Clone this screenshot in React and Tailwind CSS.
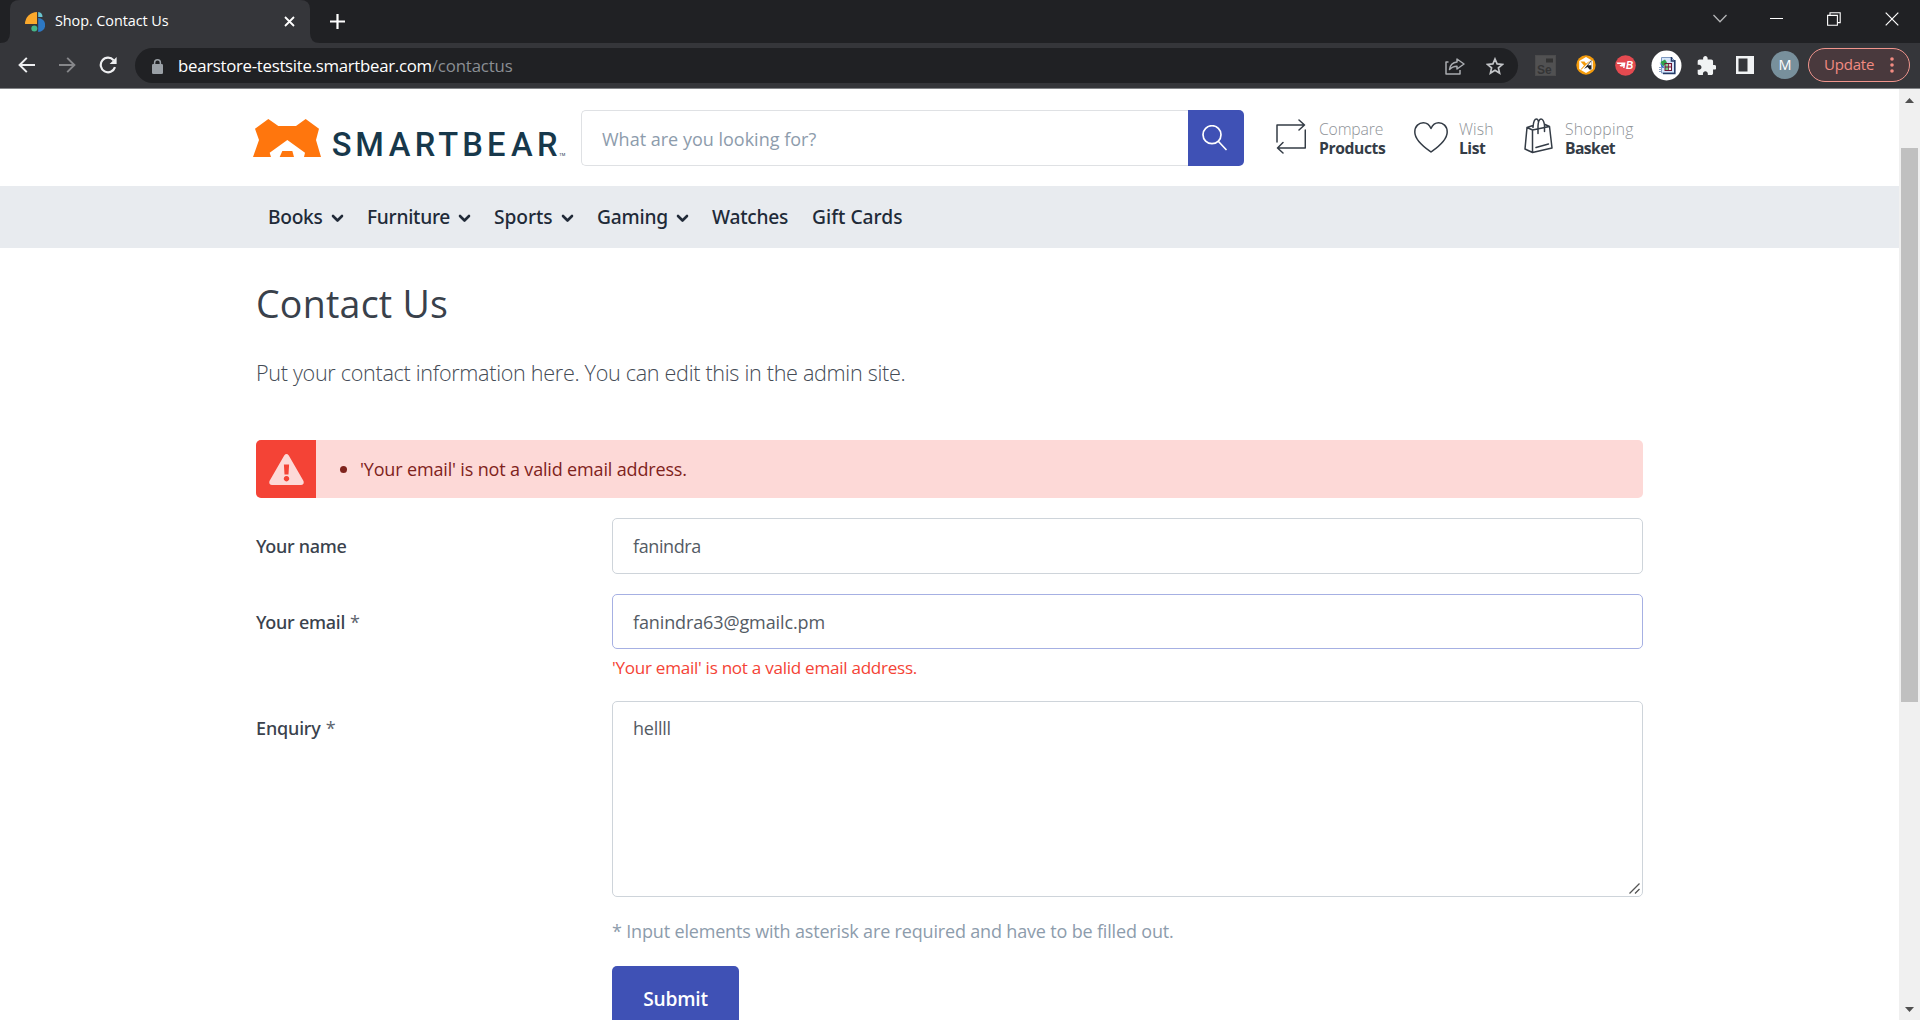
import { Search } from 'lucide-react';

const Chevron = () => (
  <svg className="h-[9px] w-[13px]" viewBox="0 0 13 9" fill="none" stroke="#212a38" strokeWidth="2.6" strokeLinecap="round" strokeLinejoin="round">
    <path d="M2 2l4.5 4.5L11 2" />
  </svg>
);

function TabStrip() {
  return (
    <div className="flex h-[43px] bg-[#202124]">
      <svg className="h-[43px] w-[310px] shrink-0 -mr-[310px]" viewBox="0 0 310 43">
        <path d="M0 43 Q10 43 10 33 V9 Q10 0 20 0 H300 Q310 0 310 9 V33 V43 Z" fill="#35363a" />
      </svg>
      <div className="relative flex w-[310px] shrink-0 items-center">
        <svg className="ml-[25px] h-5 w-5 shrink-0" viewBox="0 0 20 20">
          <path d="M0 12A12 12 0 0 1 12 0V12Z" fill="#fba92c" />
          <path d="M13.2 0A5 5 0 0 1 17.5 5H13.2Z" fill="#6bc5cf" />
          <path d="M13.2 6A7 7 0 0 1 13.2 20Z" fill="#2d78c4" />
          <circle cx="9.3" cy="16.6" r="3" fill="#45b688" />
        </svg>
        <span className="ml-[10px] w-[225px] shrink-0 whitespace-nowrap pb-[2px] text-[14.4px] leading-5 tracking-[-0.06px] text-white">Shop. Contact Us</span>
        <svg className="ml-[4px] h-[11px] w-[11px] shrink-0" viewBox="0 0 11 11" stroke="#fff" strokeWidth="1.8"><path d="M1 1l9 9M10 1l-9 9" /></svg>
      </div>
      <svg className="h-[43px] w-[14px]" viewBox="0 0 14 43"><path d="M0 33Q0 43 10 43H0Z" fill="#35363a" /></svg>
      <svg className="ml-[6px] mt-[14px] h-[15px] w-[15px]" viewBox="0 0 15 15" stroke="#fff" strokeWidth="2.2"><path d="M7.5 0v15M0 7.5h15" /></svg>
      <div className="ml-auto flex pt-[11px]">
        <svg className="mr-[43px] mt-[3px] h-[9px] w-[14px]" viewBox="0 0 14 9" fill="none" stroke="#b4b5b7" strokeWidth="1.3"><path d="M.5 1L7 7.8 13.5 1" /></svg>
        <svg className="mr-[44px] h-4 w-[13px]" viewBox="0 0 13 16"><path d="M0 7h13v1H0z" fill="#fff" /></svg>
        <svg className="mr-[44px] mt-[1px] h-[14px] w-[14px]" viewBox="0 0 14 14" fill="none" stroke="#fff" strokeWidth="1.1"><path d="M.6 3.4h9.8v9.8H.6zM3 3V.8h10.2v9.8H11" /></svg>
        <svg className="mr-[21px] mt-[1px] h-[14px] w-[14px]" viewBox="0 0 14 14" stroke="#fff" strokeWidth="1.2"><path d="M.7.7l12.6 12.6M13.3.7L.7 13.3" /></svg>
      </div>
    </div>
  );
}

function Toolbar() {
  return (
    <div className="flex h-[45px] items-start bg-[#35363a] pt-[5px]">
      <svg className="ml-[18px] mt-[9px] h-4 w-[17px] shrink-0" viewBox="0 0 17 16" fill="none" stroke="#eeeff1" strokeWidth="2"><path d="M17 8H1.5M8.8 .9L1.6 8l7.2 7.1" /></svg>
      <svg className="ml-[24px] mt-[9px] h-4 w-[17px] shrink-0" viewBox="0 0 17 16" fill="none" stroke="#86878a" strokeWidth="1.9"><path d="M0 8h15.5M8.2 .9L15.4 8l-7.2 7.1" /></svg>
      <svg className="ml-[23px] mt-[8px] h-[18px] w-[18px] shrink-0" viewBox="0 0 18 18" fill="none" stroke="#eeeff1" strokeWidth="2.2"><path d="M16 11.2A7.3 7.3 0 1 1 14.6 4.2" /><path d="M17.6 1v7h-7z" fill="#eeeff1" stroke="none" /></svg>
      <div className="ml-[18px] flex h-[35px] w-[1383px] shrink-0 rounded-full bg-[#202124]">
        <svg className="ml-[17px] mt-[11px] h-[15px] w-[11px]" viewBox="0 0 11 15"><rect y="5" width="11" height="10" rx="1.3" fill="#9aa0a6" /><path d="M2.6 6V3.7a2.9 2.9 0 0 1 5.8 0V6" fill="none" stroke="#9aa0a6" strokeWidth="1.5" /></svg>
        <div className="ml-[15px] whitespace-nowrap pt-[6px] text-[16.8px] leading-6">
          <span className="tracking-[-0.28px] text-white">bearstore-testsite.smartbear.com</span>
          <span className="tracking-[-0.13px] text-[#8b8f94]">/contactus</span>
        </div>
        <svg className="ml-auto mr-[21px] mt-[10px] h-[17px] w-[20px]" viewBox="0 0 20 17" fill="none" stroke="#a9acb0" strokeWidth="1.5" strokeLinejoin="round"><path d="M3.5 4H1v12h14v-4" /><path d="M12 1l7 5-7 5V8.2C8.800 8.200 6.500 9.200 4.500 11.500C5 7.500 7.500 4.300 12 3.900Z" /></svg>
        <svg className="mr-[14px] mt-[9px] h-[18px] w-[18px]" viewBox="0 0 18 18" fill="none" stroke="#c3c5c8" strokeWidth="1.7"><path d="M9 2l2.100 4.900 5.300.5-4 3.500 1.200 5.200L9 13.300l-4.600 2.800 1.200-5.200-4-3.500 5.300-.5z" /></svg>
      </div>
      <svg className="ml-[17px] mt-[7px] h-[21px] w-[21px] shrink-0" viewBox="0 0 21 21"><rect width="21" height="21" fill="#4b4b4c" /><rect x="1" y="1" width="19" height="19" fill="#515152" /><rect x="11" y="3.500" width="7" height="4" fill="#333" /><text x="2" y="18.500" fontSize="12" fontWeight="700" fontFamily="Liberation Sans" fill="#353536">Se</text></svg>
      <svg className="ml-[20px] mt-[7px] h-[20px] w-[20px] shrink-0" viewBox="0 0 20 20"><circle cx="10" cy="10" r="9.700" fill="#f49b0b" /><path d="M10 2l6.800 4v8L10 18l-6.800-4V6z" fill="#fff" /><path d="M4.500 6.500h4l1.500 2 5-3.500-9.500 9.500H4.500L8 10.500z" fill="#f49b0b" /><path d="M15.500 5v9.500h-2L11.500 12l-3.500 2z" fill="#222" /><path d="M12 10.300L15.500 6v4.300z" fill="#fff" /></svg>
      <svg className="ml-[19px] mt-[7px] h-[21px] w-[21px] shrink-0" viewBox="0 0 21 21"><circle cx="10.500" cy="10.500" r="10.300" fill="#e44a50" /><path d="M1.500 7.500h9L9.500 13H8l.5-1.500H5.500L4.500 10h2l-.5-1H2.500z" fill="#fff" /><text x="11" y="14" fontSize="10" fontWeight="700" fontStyle="italic" fontFamily="Liberation Sans" fill="#fff">B</text></svg>
      <svg className="ml-[15px] mt-[2px] h-[31px] w-[31px] shrink-0" viewBox="0 0 31 31"><circle cx="15.500" cy="15.500" r="15" fill="#fff" /><path d="M10.500 7.500h10l3 3V23h-13z" fill="#d7e6fa" stroke="#7d98c0" strokeWidth="1" /><path d="M20.500 7v4H24M23.800 10v13.500H12" fill="none" stroke="#253c69" strokeWidth="1.600" /><path d="M9.500 12l4.500-2.500 2 3-4 4z" fill="#2fa34b" /><path d="M8.500 12.500l5 5-2 .5z" fill="#2769c4" /><rect x="13.500" y="13" width="7.500" height="8" fill="#6d1836" /><path d="M14.500 14H17v2.500h-2.500z" fill="#8ad59a" /><path d="M17.800 14h2.200v2.500h-2.200z" fill="#f3c9cf" /><path d="M14.500 17.500H17V20h-2.500z" fill="#6fd381" /><path d="M17.800 17.500h2.200V20h-2.200z" fill="#f4f4f4" /><path d="M8 17.500h2M8 19.500h3M8 21.500h2" stroke="#8aa0c4" /></svg>
      <svg className="ml-[15px] mt-[8px] h-[19px] w-[19px] shrink-0" viewBox="1.500 1 20.500 21" fill="#f1f3f4"><path d="M20.500 11H19V7c0-1.100-.9-2-2-2h-4V3.500C13 2.120 11.880 1 10.500 1S8 2.120 8 3.500V5H4c-1.100 0-1.990.9-1.990 2v3.800H3.500c1.490 0 2.700 1.210 2.700 2.700s-1.210 2.700-2.700 2.700H2V20c0 1.100.9 2 2 2h3.800v-1.500c0-1.490 1.210-2.700 2.700-2.700 1.490 0 2.700 1.210 2.700 2.700V22H17c1.100 0 2-.9 2-2v-4h1.500c1.380 0 2.500-1.120 2.500-2.500S21.880 11 20.500 11z" /></svg>
      <svg className="ml-[20px] mt-[8px] h-[18px] w-[18px] shrink-0" viewBox="0 0 18 18"><path d="M0 0h18v18H0zM2.500 2.500v13h9v-13z" fill="#f1f3f4" fillRule="evenodd" /></svg>
      <div className="ml-[17px] mt-[3px] flex h-7 w-7 shrink-0 items-center justify-center rounded-full bg-[#78909c] text-[14.500px] leading-none text-white">M</div>
      <div className="ml-[9px] flex h-[34px] w-[102px] shrink-0 items-center rounded-full border border-[#f1958d] bg-[#49393d]">
        <span className="ml-[15px] w-[52px] pb-[2px] text-[15px] leading-5 tracking-[-0.200px] text-[#f28b82]">Update</span>
        <svg className="ml-[14px] h-4 w-1" viewBox="0 0 4 16" fill="#f28b82"><circle cx="2" cy="2" r="1.800" /><circle cx="2" cy="8" r="1.800" /><circle cx="2" cy="14" r="1.800" /></svg>
      </div>
    </div>
  );
}

function Logo() {
  return (
    <svg className="mt-[30px] h-[40px] w-[315px] shrink-0" viewBox="0 0 945 120">
      <path d="M6 29L46 0 76 21H129L158 0 198 29 189 63 204 114H153L156 101 103 63 50 101 54 114H0L18 63Z" fill="#ff760d" />
      <path d="M88 96H118L123 114H80Z" fill="#ff760d" />
      <text y="110" x="236 307 407 485 556 628 702 774 852" fontSize="98" fontWeight="500" fontFamily="Roboto" fill="#17384b">SMARTBEAR</text>
      <text x="919" y="110" fontSize="12" fontFamily="Roboto" fill="#17384b">TM</text>
    </svg>
  );
}

function HeaderLink({ top, bottom, className, topClass, bottomClass, children }) {
  return (
    <div className={`flex shrink-0 ${className}`}>
      {children}
      <div className="whitespace-nowrap pt-[31px] text-[15.700px] leading-[19px]">
        <div className={`font-light text-[#8e9297] ${topClass}`}>{top}</div>
        <div className={`font-bold text-[#343c46] ${bottomClass}`}>{bottom}</div>
      </div>
    </div>
  );
}

function Header() {
  return (
    <header className="flex h-[97px] pl-[253px]">
      <Logo />
      <div className="ml-[13px] mt-[21px] flex h-14 w-[663px] shrink-0">
        <div className="flex-1 rounded-l-[5px] border border-r-0 border-[#dfe1e4] pl-5 pt-[14px] text-[18px] leading-7 text-[#8d9cac]">What are you looking for?</div>
        <div className="w-14 rounded-r-[5px] bg-[#3f51b5]">
          <svg className="ml-[14px] mt-[15px] h-[26px] w-[25px]" viewBox="0 0 25 26" fill="none" stroke="#fff" strokeWidth="1.700" strokeLinecap="round"><circle cx="10" cy="9.700" r="9" /><path d="M16.500 16.500l7.500 8" /></svg>
        </div>
      </div>
      <HeaderLink top="Compare" bottom="Products" className="ml-8 w-[138px]" topClass="tracking-[-0.140px]" bottomClass="tracking-[-0.400px]">
        <svg className="mr-[13px] mt-[30px] h-[35px] w-[30px]" viewBox="0 0 30 35" fill="none" stroke="#343c46" strokeWidth="1.500" strokeLinecap="round" strokeLinejoin="round"><path d="M1 23V6h27.500M23 1l5.500 5-5.500 5M29.300 11v18H1.500M7 23.500L1.500 29 7 34" /></svg>
      </HeaderLink>
      <HeaderLink top="Wish" bottom="List" className="w-[110px]" topClass="tracking-[0.100px]" bottomClass="tracking-[-0.500px]">
        <svg className="mr-[11px] mt-[33px] h-[31px] w-[34px]" viewBox="0 0 34 31" fill="none" stroke="#343c46" strokeWidth="1.500" strokeLinejoin="round"><path d="M17 30C12 26.500 .8 19 .8 10C.8 4 5 .8 9.300 .8C12.500 .8 15.500 3 17 6.500C18.500 3 21.500 .8 24.700 .8C29 .8 33.200 4 33.200 10C33.200 19 22 26.500 17 30Z" /></svg>
      </HeaderLink>
      <HeaderLink top="Shopping" bottom="Basket" topClass="tracking-[0.240px]" bottomClass="tracking-[-0.600px]">
        <svg className="mr-[12px] mt-[29px] h-[36px] w-[29px]" viewBox="0 0 29 36" fill="none" stroke="#343c46" strokeWidth="1.500" strokeLinecap="round" strokeLinejoin="round"><path d="M3 9.500L8.500 12 25.500 8.500 28 30 8.500 34.500 1 31ZM8.500 12V34.500M12 29.500L24.500 26M3 9.500L9 7.500M25.500 8.500L21 6.500M14 15.500V8Q14.500 1 17 1Q19.500 1 20.500 7V13.500M9 9.500Q9.500 1 12.500 1Q14 1 14.500 4" /></svg>
      </HeaderLink>
    </header>
  );
}

const NAV = [
  { label: 'Books', menu: true, box: 'w-[99px]', track: 'tracking-[-0.300px]', gap: 'ml-[8px]' },
  { label: 'Furniture', menu: true, box: 'w-[127px]', track: 'tracking-[-0.280px]', gap: 'ml-[8px]' },
  { label: 'Sports', menu: true, box: 'w-[103px]', track: 'tracking-[-0.060px]', gap: 'ml-[8px]' },
  { label: 'Gaming', menu: true, box: 'w-[115px]', track: 'tracking-[-0.200px]', gap: 'ml-[8px]' },
  { label: 'Watches', box: 'w-[100px]', track: 'tracking-[-0.250px]' },
  { label: 'Gift Cards', box: 'w-[100px]', track: 'tracking-[0.020px]' },
];

function Nav() {
  return (
    <nav className="flex h-[62px] items-center bg-[#e8ebef] pl-[268px] font-['Noto_Sans',sans-serif] text-[19.200px] font-medium text-[#212a38]">
      {NAV.map((n) => (
        <div key={n.label} className={`flex shrink-0 items-center whitespace-nowrap ${n.box}`}>
          <span className={`pb-[1px] leading-7 ${n.track}`}>{n.label}</span>
          {n.menu && <span className={`pt-[2px] ${n.gap}`}><Chevron /></span>}
        </div>
      ))}
    </nav>
  );
}

const Label = ({ text, track, required, className = 'pt-[14px]' }) => (
  <div className={`w-[356px] shrink-0 text-[18px] leading-7 text-[#3a424d] ${className}`}>
    <span className={`font-['Noto_Sans',sans-serif] font-medium ${track}`}>{text}</span>
    {required && <span className="ml-[5px] text-[#5c636d]">*</span>}
  </div>
);

function Content() {
  return (
    <main className="w-[1387px] ml-[256px] text-[18px] leading-7">
      <h1 className="pt-[30px] text-[37.500px] leading-[52px] tracking-[0.250px] text-[#39414b]">Contact Us</h1>
      <p className="mt-[27px] whitespace-nowrap text-[21.600px] font-light leading-8 tracking-[-0.310px] text-[#444b55]">Put your contact information here. You can edit this in the admin site.</p>
      <div className="mt-[51px] flex h-[58px] items-center overflow-hidden rounded-[5px] bg-[#fdd9d7] text-[#7f231c]">
        <div className="flex h-full w-[60px] items-center justify-center bg-[#f44336]">
          <svg className="h-[31px] w-[35px]" viewBox="0 0 35 31"><path d="M15.200 1.500Q17.500-1.300 19.800 1.500L34.500 27Q35.500 30.800 32 31H3Q-.5 30.800 .5 27ZM14.900 10.500L15.500 20.500H19.500L20.100 10.500ZM17.500 22A2.700 2.700 0 1 0 17.510 22Z" fill="#fdd9d7" fillRule="evenodd" /></svg>
        </div>
        <span className="ml-6 h-[7px] w-[7px] rounded-full bg-[#7f231c]" />
        <span className="ml-[13px] tracking-[-0.160px]">&#39;Your email&#39; is not a valid email address.</span>
      </div>
      <div className="mt-5 flex">
        <Label text="Your name" track="tracking-[-0.300px]" />
        <div className="h-14 flex-1 rounded-[5px] border border-[#ced4da] pl-5 pt-[13px] tracking-[-0.400px] text-[#545b64]">fanindra</div>
      </div>
      <div className="mt-5 flex">
        <Label text="Your email" track="tracking-[-0.260px]" required />
        <div className="flex-1">
          <div className="h-[55px] rounded-[5px] border border-[#a6b0e3] pl-5 pt-[13px] tracking-[-0.120px] text-[#545b64]">fanindra63@gmailc.pm</div>
          <div className="mt-[5px] text-[17.100px] leading-7 tracking-[-0.280px] text-[#f44336]">&#39;Your email&#39; is not a valid email address.</div>
        </div>
      </div>
      <div className="mt-[19px] flex">
        <Label text="Enquiry" track="tracking-[-0.150px]" required className="pt-[13px]" />
        <div className="flex h-[196px] flex-1 rounded-[5px] border border-[#ced4da] pl-5 pt-[12px] tracking-[-0.250px] text-[#545b64]">
          hellll
          <svg className="mb-[2px] ml-auto mr-[2px] h-[11px] w-[11px] self-end" viewBox="0 0 11 11" stroke="#555" strokeWidth="1.300"><path d="M.5 10.500l10-10M6 10.500l4.500-4.500" /></svg>
        </div>
      </div>
      <div className="ml-[356px]">
        <p className="pt-5 tracking-[-0.170px] text-[#8d9cac]">* Input elements with asterisk are required and have to be filled out.</p>
        <button className="mt-[21px] flex h-16 w-[127px] justify-center rounded-[5px] bg-[#3f51b5] pt-[19px] text-[19.200px] font-semibold leading-7 tracking-[-0.200px] text-white">Submit</button>
      </div>
    </main>
  );
}

export default function App() {
  return (
    <div className="flex h-[1020px] w-[1920px] flex-col overflow-hidden bg-white font-['Open_Sans',sans-serif]">
      <TabStrip />
      <Toolbar />
      <div className="h-px shrink-0 bg-[#828487]" />
      <div className="flex h-[931px] shrink-0 overflow-hidden">
        <div className="h-full w-[1899px] shrink-0 overflow-hidden">
          <Header />
          <Nav />
          <Content />
        </div>
        <div className="flex h-full w-[21px] flex-col bg-[#f0f0f0]">
          <svg className="ml-[6px] mt-[9px] h-[5px] w-[9px]" viewBox="0 0 9 5"><path d="M4.500 0L9 5H0z" fill="#505050" /></svg>
          <div className="ml-[2px] mt-[45px] h-[554px] w-[17px] bg-[#c0c0c0]" />
          <svg className="mb-[8px] ml-[6px] mt-auto h-[5px] w-[9px]" viewBox="0 0 9 5"><path d="M0 0h9L4.500 5z" fill="#505050" /></svg>
        </div>
      </div>
    </div>
  );
}
